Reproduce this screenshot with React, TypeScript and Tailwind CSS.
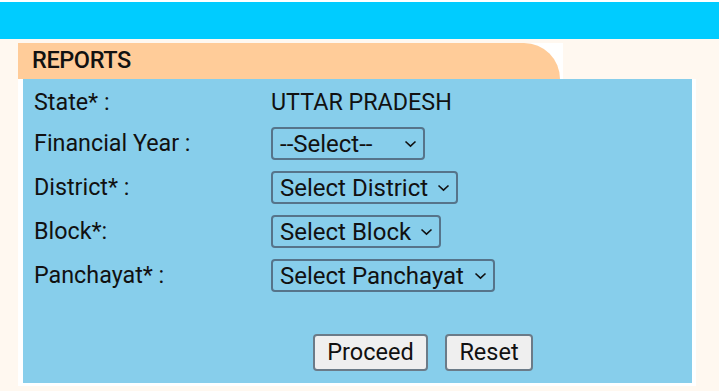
import React from "react";

const rows = [
  { label: "Financial Year :", value: "--Select--", width: "w-[154px]" },
  { label: "District* :", value: "Select District", width: "w-[187px]" },
  { label: "Block*:", value: "Select Block", width: "w-[170px]" },
  { label: "Panchayat* :", value: "Select Panchayat", width: "w-[224px]" },
];

function Chevron() {
  return (
    <svg width="13" height="8" viewBox="0 0 13 8" className="shrink-0">
      <path d="M1.5 1.5 L6.5 6.2 L11.5 1.5" fill="none" stroke="#111" strokeWidth="1.6" />
    </svg>
  );
}

function FakeSelect({ value, width }: { value: string; width: string }) {
  return (
    <div
      className={`flex h-[33px] ${width} items-center justify-between rounded-[4px] border-2 border-[#56748a] pl-[7px] pr-[6px] text-[24px] leading-none text-[#111]`}
    >
      <span className="whitespace-nowrap">{value}</span>
      <Chevron />
    </div>
  );
}

export default function App() {
  return (
    <div
      className="min-h-[391px] bg-[#fff8f0]"
      style={{ fontFamily: "Roboto, 'Liberation Sans', sans-serif" }}
    >
      <div className="h-[2px] bg-white" />
      <div className="h-[37px] bg-[#00ccff]" />
      <div className="pl-[18px] pt-[4px]">
        <div className="w-[545px] bg-white">
          <div className="flex h-[36px] w-[542px] items-center rounded-tr-[46px] bg-[#ffcc99] pl-[14px] text-[23.5px] font-medium tracking-[-0.4px] text-[#111]">
            REPORTS
          </div>
        </div>
        <div className="w-[678px] bg-white px-[5px] pb-[3px] pr-[4px]">
          <div className="h-[304px] bg-[#87ceeb] pl-[11px] pt-[11px] text-[23.3px] leading-none text-[#111]">
            <div className="flex h-[26px] items-center">
              <span className="w-[237px]">State* :</span>
              <span>UTTAR PRADESH</span>
            </div>
            <div className="mt-[11px] flex flex-col gap-[11px]">
              {rows.map((r) => (
                <div key={r.label} className="flex items-center">
                  <span className="w-[237px]">{r.label}</span>
                  <FakeSelect value={r.value} width={r.width} />
                </div>
              ))}
            </div>
            <div className="mt-[42px] flex gap-[17px] pl-[279px]">
              <button className="h-[37px] w-[115px] rounded-[4px] border-2 border-[#6b7b88] bg-[#efefef] text-[23.5px] text-[#111]">
                Proceed
              </button>
              <button className="h-[37px] w-[88px] rounded-[4px] border-2 border-[#6b7b88] bg-[#efefef] text-[23.5px] text-[#111]">
                Reset
              </button>
            </div>
          </div>
        </div>
      </div>
    </div>
  );
}
